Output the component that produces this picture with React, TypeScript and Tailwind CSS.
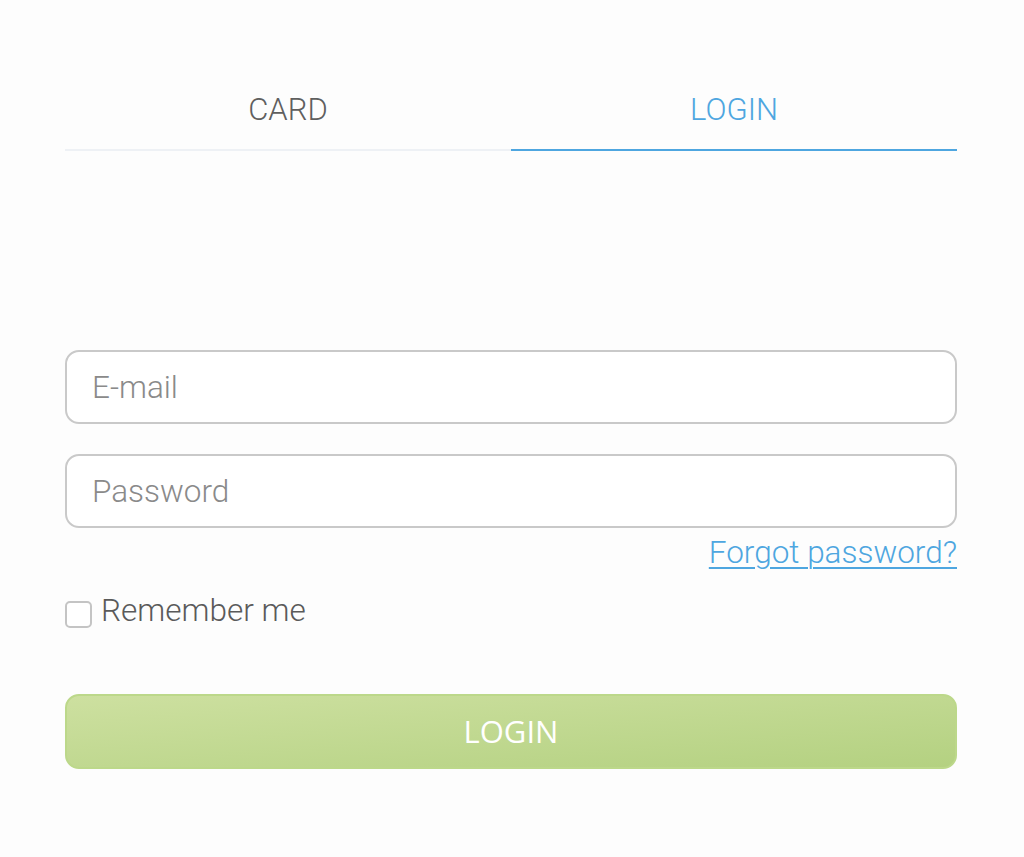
import React, { useState } from "react";

export default function App() {
  const [tab, setTab] = useState<"card" | "login">("login");
  const [remember, setRemember] = useState(false);

  const tabs = [
    { key: "card" as const, label: "CARD" },
    { key: "login" as const, label: "LOGIN" },
  ];

  return (
    <div
      className="min-h-[857px] w-full bg-[#fdfdfd] pl-[65px] pr-[67px] pt-[86px]"
      style={{ fontFamily: "Roboto, 'Liberation Sans', sans-serif" }}
    >
      <div className="flex">
        {tabs.map((t) => {
          const active = tab === t.key;
          return (
            <button
              key={t.key}
              onClick={() => setTab(t.key)}
              className={
                active
                  ? "flex-1 h-[65px] border-b-2 border-[#4ea6e0] text-[#4ea6e0] text-[31px] font-light pb-[14px]"
                  : "flex-1 h-[65px] border-b-2 border-[#eef1f5] text-[#5f5f5f] text-[31px] font-light pb-[14px]"
              }
            >
              {t.label}
            </button>
          );
        })}
      </div>

      <form className="mt-[199px] flex flex-col" onSubmit={(e) => e.preventDefault()}>
        <input
          type="email"
          placeholder="E-mail"
          className="h-[74px] w-full rounded-[14px] border-2 border-[#c9c9c9] bg-white px-[25px] text-[31.5px] font-light text-[#555] placeholder:text-[#8a8a8a] outline-none"
        />
        <input
          type="password"
          placeholder="Password"
          className="mt-[30px] h-[74px] w-full rounded-[14px] border-2 border-[#c9c9c9] bg-white px-[25px] text-[31.5px] font-light text-[#555] placeholder:text-[#8a8a8a] outline-none"
        />
        <div className="flex justify-end mt-[4px]">
          <a
            href="#"
            className="text-[31.5px] font-light leading-[42px] text-[#4ea6e0] underline underline-offset-[4px] decoration-[2px]"
          >
            Forgot password?
          </a>
        </div>

        <label className="mt-[16px] flex items-center gap-[9px] cursor-pointer">
          <span
            onClick={() => setRemember(!remember)}
            className="mt-[6px] h-[27px] w-[27px] rounded-[5px] border-2 border-[#c4c4c4] bg-white"
          />
          <span className="text-[31.5px] font-light leading-[42px] text-[#5a5a5a]">Remember me</span>
        </label>

        <button
          type="submit"
          className="mt-[62px] h-[75px] w-full rounded-[14px] border-2 border-[#bcd88a] bg-gradient-to-br from-[#cde0a0] to-[#b4d181] text-[31px] text-white"
          style={{ fontFamily: "'Open Sans', 'Noto Sans', sans-serif" }}
        >
          LOGIN
        </button>
      </form>
    </div>
  );
}
